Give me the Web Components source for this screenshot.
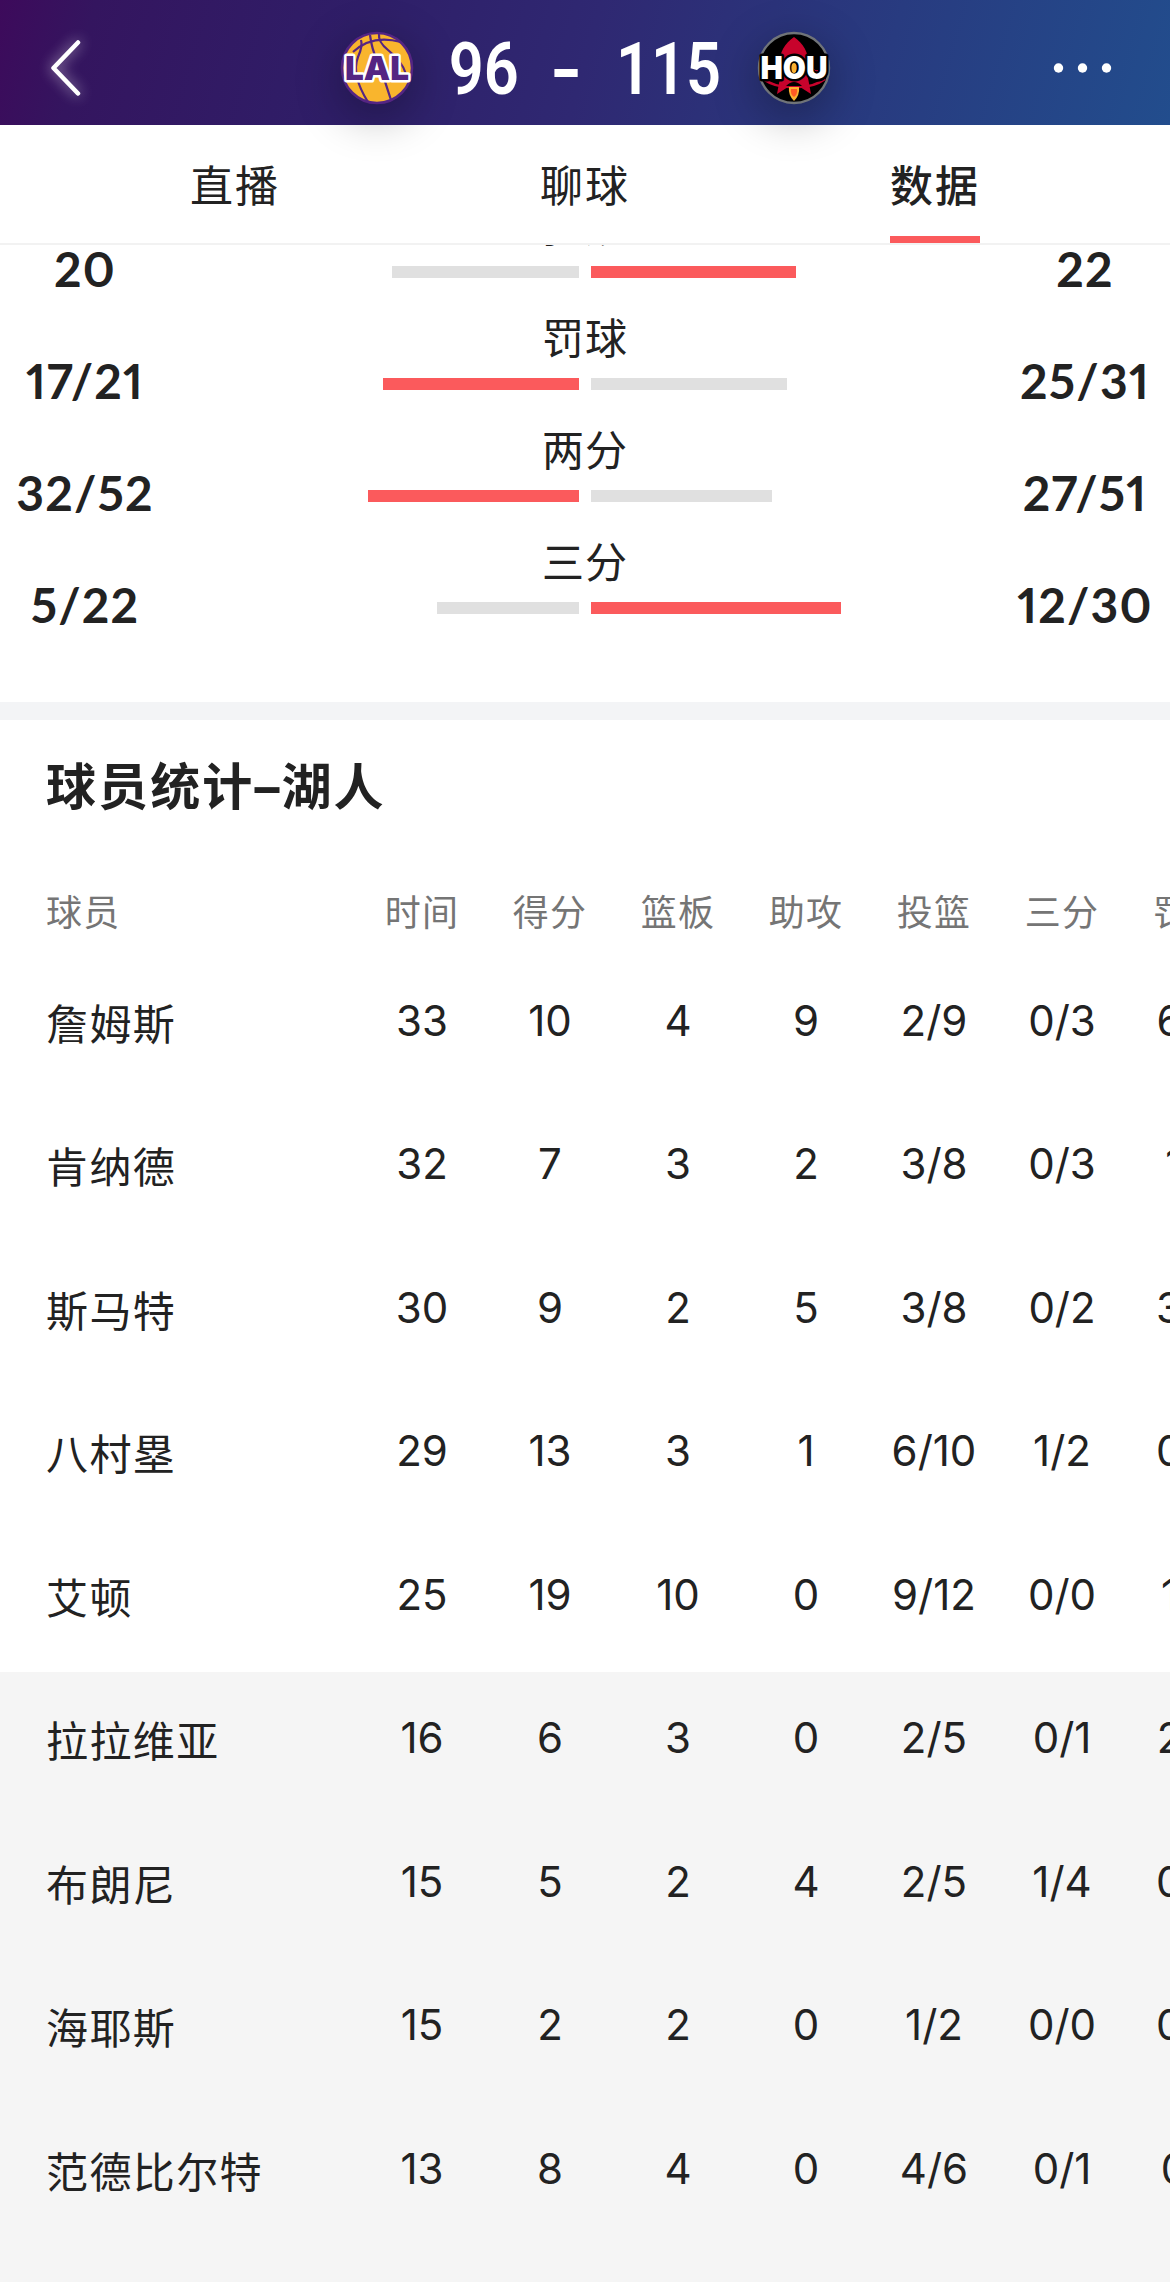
<!DOCTYPE html>
<html lang="zh-CN">
<head>
<meta charset="utf-8">
<title>湖人 96 - 115 火箭</title>
<style>
  body {
    margin: 0;
    background: #fff;
    color: #222;
    font-family: Inter, "Noto Sans CJK SC", sans-serif;
  }
</style>
</head>
<body>
<match-page>
  <match-header slot="top" home="96" away="115">
    <team-logo slot="home" team="lal"></team-logo>
    <team-logo slot="away" team="hou"></team-logo>
  </match-header>
  <tab-bar slot="top">
    <tab-item>直播</tab-item>
    <tab-item>聊球</tab-item>
    <tab-item active>数据</tab-item>
  </tab-bar>
  <team-compare>
    <compare-row label="犯规" left="20" right="22" left-bar="187" right-bar="205" lead="right"></compare-row>
    <compare-row label="罚球" left="17/21" right="25/31" left-bar="196" right-bar="196" lead="left"></compare-row>
    <compare-row label="两分" left="32/52" right="27/51" left-bar="211" right-bar="181" lead="left"></compare-row>
    <compare-row label="三分" left="5/22" right="12/30" left-bar="142" right-bar="250" lead="right"></compare-row>
  </team-compare>
  <player-stats>球员统计–湖人</player-stats>
</match-page>

<script>
/**
 * Creates a template element from markup.
 *
 * @param {string} html - The markup.
 * @returns {HTMLTemplateElement} The template.
 */
const createTemplate = html => {
  const template = document.createElement('template')
  template.innerHTML = html
  return template
}

/* ------------PAGE----------- */

const pageTemplate = createTemplate(`
  <style>
    :host {
      display: flex;
      flex-direction: column;
      height: 2288px;
      overflow: hidden;
    }

    #top {
      flex: none;
      position: relative;
      z-index: 1;
    }
  </style>
  <div id="top"><slot name="top"></slot></div>
  <slot></slot>
`)

/**
 * Represents the match page, with a fixed top and scrolled content.
 */
customElements.define('match-page',
  class extends HTMLElement {
    constructor () {
      super()
      this.attachShadow({ mode: 'open' })
        .appendChild(pageTemplate.content.cloneNode(true))
    }
  }
)

/* ------------HEADER----------- */

const headerTemplate = createTemplate(`
  <style>
    :host {
      display: grid;
      grid-template-columns: 1fr auto 1fr;
      align-items: center;
      position: relative;
      z-index: 1;
      height: 125px;
      box-sizing: border-box;
      padding: 11px 58px 0 48px;
      background: linear-gradient(106deg, #3d0a5b 0%, #34155f 8%, #2f1e68 30%, #2f2872 50%, #283b80 75%, #224d8d 100%);
      color: #fff;
    }

    svg {
      display: block;
      overflow: visible;
    }

    #back {
      filter: drop-shadow(0 0 7px rgba(255, 255, 255, 0.65));
    }

    #more {
      justify-self: end;
    }

    #score {
      display: flex;
      align-items: center;
      margin-left: 10px;
    }

    .points {
      display: flex;
      justify-content: center;
      padding-top: 2px;
      font: 600 73px/90px Roboto, sans-serif;
    }

    .points span {
      transform: scaleX(0.84);
    }

    #home {
      width: 66px;
      margin-left: 38px;
    }

    #dash {
      width: 22px;
      margin: 0 41px 0 39px;
      padding-top: 4px;
      font-weight: 700;
    }

    #dash span {
      transform: scaleX(1.15);
    }

    #away {
      width: 101px;
      margin-right: 38px;
    }
  </style>
  <svg id="back" width="34" height="60" viewBox="0 0 34 60" fill="none" stroke="#fff" stroke-width="4.5" stroke-linecap="round" stroke-linejoin="round">
    <path d="M30 4.500L5.500 30L30 55.500"/>
  </svg>
  <div id="score">
    <slot name="home"></slot>
    <div class="points" id="home"><span></span></div>
    <div class="points" id="dash"><span>-</span></div>
    <div class="points" id="away"><span></span></div>
    <slot name="away"></slot>
  </div>
  <svg id="more" width="60" height="12" viewBox="0 0 60 12" fill="#fff">
    <circle cx="6.500" cy="6" r="4.700"/>
    <circle cx="30.500" cy="6" r="4.700"/>
    <circle cx="54.500" cy="6" r="4.700"/>
  </svg>
`)

/**
 * Represents the header with the score.
 */
customElements.define('match-header',
  class extends HTMLElement {
    constructor () {
      super()
      this.attachShadow({ mode: 'open' })
        .appendChild(headerTemplate.content.cloneNode(true))
    }

    connectedCallback () {
      this.shadowRoot.querySelector('#home span').textContent = this.getAttribute('home')
      this.shadowRoot.querySelector('#away span').textContent = this.getAttribute('away')
    }
  }
)

const logos = {
  lal: `
    <circle cx="36" cy="36" r="35" fill="#f9b52d" stroke="#552583" stroke-width="2.600"/>
    <g fill="none" stroke="#552583" stroke-width="2.200">
      <path d="M12 20Q31 2 60 10"/>
      <path d="M20 8Q22 14 17 25Q10 43 27 70"/>
      <path d="M29 3Q31 18 36 28Q44 48 50 68"/>
      <path d="M38 2Q37 10 47 18Q61 29 65 42"/>
    </g>
    <text x="36" y="47.500" text-anchor="middle" textLength="64" lengthAdjust="spacingAndGlyphs" font-size="33" fill="#552583" stroke="#fff" stroke-width="5">LAL</text>`,
  hou: `
    <circle cx="36" cy="36" r="35" fill="#000" stroke="#707478" stroke-width="2.400"/>
    <path d="M36 5C27 11 21 21 22 31V46L19 62L30 55H42L53 62L50 46V31C51 21 45 11 36 5Z" fill="#c8032c"/>
    <path d="M5 47Q18 56 36 55Q55 56 67 47" fill="none" stroke="#c8032c" stroke-width="2.500"/>
    <path d="M28 54Q36 46 44 54Z" fill="#000"/>
    <path d="M31 55H41Q42 63 36 69Q30 63 31 55Z" fill="#fbb232"/>
    <path d="M33 57H39Q40 62 36 65Q32 62 33 57Z" fill="#ff5a24"/>
    <text x="36" y="46.500" text-anchor="middle" textLength="67" lengthAdjust="spacingAndGlyphs" font-size="31" fill="#fff" stroke="#000" stroke-width="5">HOU</text>
    <ellipse cx="36" cy="36" rx="2.600" ry="5" fill="#fbb232"/>
    <path d="M56 37q1 3 4 2v-1q-2 1-4-1Z" fill="#c8032c"/>`
}

/**
 * Represents a round team logo.
 */
customElements.define('team-logo',
  class extends HTMLElement {
    constructor () {
      super()
      this.attachShadow({ mode: 'open' })
    }

    connectedCallback () {
      this.shadowRoot.innerHTML = `
        <style>
          :host {
            display: block;
            width: 72px;
            height: 72px;
            border-radius: 50%;
            box-shadow: 0 12px 48px rgba(0, 0, 0, 0.33);
          }

          svg {
            display: block;
            overflow: visible;
          }

          text {
            font-family: Inter, sans-serif;
            font-weight: 900;
            paint-order: stroke;
            stroke-linejoin: round;
          }
        </style>
        <svg width="72" height="72" viewBox="0 0 72 72">${logos[this.getAttribute('team')]}</svg>
      `
    }
  }
)

/* ------------TABS----------- */

const tabBarTemplate = createTemplate(`
  <style>
    :host {
      display: flex;
      height: 118px;
      padding: 0 60px;
      background: #fff;
      border-bottom: 2px solid #f2f2f2;
    }
  </style>
  <slot></slot>
`)

/**
 * Represents the tab bar.
 */
customElements.define('tab-bar',
  class extends HTMLElement {
    constructor () {
      super()
      this.attachShadow({ mode: 'open' })
        .appendChild(tabBarTemplate.content.cloneNode(true))
    }
  }
)

const tabItemTemplate = createTemplate(`
  <style>
    :host {
      display: flex;
      flex: 1;
      flex-direction: column;
      align-items: center;
      font-size: 43px;
      letter-spacing: 2px;
    }

    #label {
      height: 111px;
      line-height: 122px;
    }

    #line {
      width: 90px;
      height: 7px;
    }

    :host([active]) {
      font-weight: 500;
    }

    :host([active]) #line {
      background: #fb5a5c;
    }
  </style>
  <div id="label"><slot></slot></div>
  <div id="line"></div>
`)

/**
 * Represents one tab.
 */
customElements.define('tab-item',
  class extends HTMLElement {
    constructor () {
      super()
      this.attachShadow({ mode: 'open' })
        .appendChild(tabItemTemplate.content.cloneNode(true))
    }
  }
)

/* ------------TEAM COMPARISON----------- */

const compareTemplate = createTemplate(`
  <style>
    :host {
      display: block;
      flex: none;
      height: 503px;
      margin-top: -46px;
      border-bottom: 18px solid #f3f4f6;
    }
  </style>
  <slot></slot>
`)

/**
 * Represents the list of compared team stats.
 */
customElements.define('team-compare',
  class extends HTMLElement {
    constructor () {
      super()
      this.attachShadow({ mode: 'open' })
        .appendChild(compareTemplate.content.cloneNode(true))
    }
  }
)

const compareRowTemplate = createTemplate(`
  <style>
    :host {
      display: grid;
      grid-template-columns: 170px 1fr 170px;
      height: 112px;
    }

    .value {
      padding-top: 38px;
      font: 700 48px/64px Lato, sans-serif;
      font-variant-numeric: lining-nums proportional-nums;
      letter-spacing: 1.200px;
      text-align: center;
    }

    #label {
      height: 67px;
      font-size: 42px;
      line-height: 56px;
      letter-spacing: 1px;
      text-align: center;
    }

    #bars {
      display: grid;
      grid-template-columns: 1fr 1fr;
      gap: 12px;
    }

    .bar {
      height: 12px;
      background: #e0e0e0;
    }

    #leftBar {
      justify-self: end;
    }

    .lead {
      background: #fb5a5c;
    }
  </style>
  <div class="value" id="left"></div>
  <div>
    <div id="label"></div>
    <div id="bars">
      <div class="bar" id="leftBar"></div>
      <div class="bar" id="rightBar"></div>
    </div>
  </div>
  <div class="value" id="right"></div>
`)

/**
 * Represents one stat compared between the teams.
 */
customElements.define('compare-row',
  class extends HTMLElement {
    constructor () {
      super()
      this.attachShadow({ mode: 'open' })
        .appendChild(compareRowTemplate.content.cloneNode(true))
    }

    connectedCallback () {
      this.shadowRoot.querySelector('#label').textContent = this.getAttribute('label')

      for (const side of ['left', 'right']) {
        this.shadowRoot.querySelector(`#${side}`).textContent = this.getAttribute(side)
        const bar = this.shadowRoot.querySelector(`#${side}Bar`)
        bar.style.width = `${this.getAttribute(`${side}-bar`)}px`
        bar.classList.toggle('lead', this.getAttribute('lead') === side)
      }
    }
  }
)

/* ------------PLAYER STATS----------- */

const columns = ['时间', '得分', '篮板', '助攻', '投篮', '三分', '罚球']

const starters = [
  ['詹姆斯', '33', '10', '4', '9', '2/9', '0/3', '6/8'],
  ['肯纳德', '32', '7', '3', '2', '3/8', '0/3', '1/1'],
  ['斯马特', '30', '9', '2', '5', '3/8', '0/2', '3/4'],
  ['八村塁', '29', '13', '3', '1', '6/10', '1/2', '0/0'],
  ['艾顿', '25', '19', '10', '0', '9/12', '0/0', '1/2']
]

const bench = [
  ['拉拉维亚', '16', '6', '3', '0', '2/5', '0/1', '2/2'],
  ['布朗尼', '15', '5', '2', '4', '2/5', '1/4', '0/0'],
  ['海耶斯', '15', '2', '2', '0', '1/2', '0/0', '0/0'],
  ['范德比尔特', '13', '8', '4', '0', '4/6', '0/1', '0/1']
]

const playerStatsTemplate = createTemplate(`
  <style>
    :host {
      display: flex;
      flex: 1;
      flex-direction: column;
      overflow: hidden;
    }

    h2 {
      margin: 0;
      padding-left: 46px;
      height: 152px;
      font: 700 50px/135px Inter, "Noto Sans CJK SC", sans-serif;
      letter-spacing: 2.100px;
    }

    .row {
      display: grid;
      grid-template-columns: 312px repeat(7, 128px);
      width: 1208px;
      height: 143.500px;
      padding-left: 46px;
      line-height: 132px;
      font-size: 42px;
      text-align: center;
    }

    .row :first-child {
      font-size: 42px;
      line-height: 139px;
      letter-spacing: 1.400px;
      text-align: left;
    }

    #head {
      height: 82.500px;
      color: #757575;
    }

    #head div {
      font-size: 36px;
      line-height: 82px;
      letter-spacing: 1.200px;
    }

    #bench {
      flex: 1;
      margin-bottom: 6px;
      background: #f5f5f5;
    }
  </style>
  <h2><slot></slot></h2>
  <div class="row" id="head"></div>
  <div id="starters"></div>
  <div id="bench"></div>
`)

/**
 * Represents the table of player stats.
 */
customElements.define('player-stats',
  class extends HTMLElement {
    constructor () {
      super()
      this.attachShadow({ mode: 'open' })
        .appendChild(playerStatsTemplate.content.cloneNode(true))
    }

    connectedCallback () {
      this._fillRow(this.shadowRoot.querySelector('#head'), ['球员', ...columns])
      this._addPlayers('#starters', starters)
      this._addPlayers('#bench', bench)
    }

    /**
     * Adds a row for each player.
     *
     * @param {string} selector - The group to add the rows to.
     * @param {string[][]} players - The players.
     */
    _addPlayers (selector, players) {
      const group = this.shadowRoot.querySelector(selector)
      for (const player of players) {
        const row = document.createElement('div')
        row.className = 'row'
        this._fillRow(row, player)
        group.appendChild(row)
      }
    }

    /**
     * Fills a row with cells.
     *
     * @param {HTMLElement} row - The row.
     * @param {string[]} values - The cell texts.
     */
    _fillRow (row, values) {
      for (const value of values) {
        const cell = document.createElement('div')
        cell.textContent = value
        row.appendChild(cell)
      }
    }
  }
)
</script>
</body>
</html>
